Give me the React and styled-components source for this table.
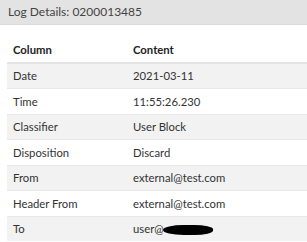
import styled, { createGlobalStyle } from 'styled-components';

const GlobalStyle = createGlobalStyle`
    body{
        margin:0;
        background:#fff;
        font-family:Lato, "Open Sans", sans-serif;
        color:#333;
    }
`;

const Panel = styled.div`
    width:307px;
    height:242px;
    overflow:hidden;
`;

const TitleBar = styled.div`
    height:24px;
    line-height:24px;
    padding-left:8px;
    background:#e3e3e3;
    border-bottom:1px solid #dadada;
    font-size:12px;
    color:#444;
`;

const Table = styled.table`
    margin:12px 0 0 7px;
    width:320px;
    border-collapse:collapse;
    font-size:11.3px;
    td, th{
        height:24.5px;
        padding:0 0 0 6px;
        text-align:left;
        white-space:nowrap;
    }
    th{
        font-weight:700;
        color:#222;
        border-bottom:2px solid #e4e4e4;
    }
    td:first-child, th:first-child{
        width:114px;
    }
`;

const Row = styled.tr`
    background:${({ $odd }) => ($odd ? '#f2f2f2' : '#fff')};
    border-top:1px solid #e8e8e8;
`;

const Redacted = styled.span`
    display:inline-block;
    width:50px;
    height:10px;
    margin-left:-1px;
    vertical-align:-2px;
    background:#000;
    border-radius:50% 45% 45% 50% / 60% 50% 50% 60%;
`;

const rows = [
    ['Date', '2021-03-11'],
    ['Time', '11:55:26.230'],
    ['Classifier', 'User Block'],
    ['Disposition', 'Discard'],
    ['From', 'external@test.com'],
    ['Header From', 'external@test.com'],
];

const App = () => {
    return (
        <Panel>
            <GlobalStyle />
            <TitleBar>Log Details: 0200013485</TitleBar>
            <Table>
                <thead>
                    <tr>
                        <th>Column</th>
                        <th>Content</th>
                    </tr>
                </thead>
                <tbody>
                    {rows.map(([k, v], i) => (
                        <Row key={k} $odd={i % 2 === 0}>
                            <td>{k}</td>
                            <td>{v}</td>
                        </Row>
                    ))}
                    <Row $odd>
                        <td>To</td>
                        <td>user@<Redacted /></td>
                    </Row>
                </tbody>
            </Table>
        </Panel>
    );
};

export default App;
